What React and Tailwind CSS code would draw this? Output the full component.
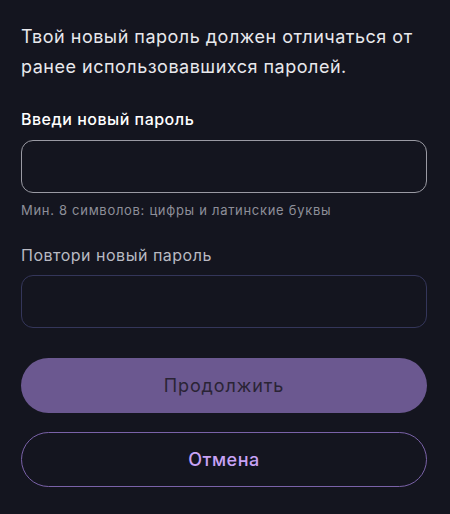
import React from "react";

const font = { fontFamily: "Inter, 'Noto Sans', sans-serif" };

export default function App() {
  return (
    <div className="min-h-[514px] w-[450px] bg-[#14151f] pl-[21px] pr-[23px] pt-[22px]" style={font}>
      <p className="text-[18px] leading-[30px] text-[#e8e8ec] tracking-[0.5px]">
        Твой новый пароль должен отличаться от ранее использовавшихся паролей.
      </p>

      <label className="mt-[26px] block text-[16px] font-medium leading-[22px] tracking-[0.5px] text-white">
        Введи новый пароль
      </label>
      <input
        type="password"
        className="mt-[10px] block h-[53px] w-full rounded-[12px] border border-[#9a9aa3] bg-transparent px-4 text-white outline-none"
      />
      <p className="mt-[8px] text-[13px] leading-[18px] tracking-[0.7px] text-[#8e8f99]">
        Мин. 8 символов: цифры и латинские буквы
      </p>

      <label className="mt-[25px] block text-[16px] leading-[22px] tracking-[0.5px] text-[#b9bac2]">
        Повтори новый пароль
      </label>
      <input
        type="password"
        className="mt-[9px] block h-[53px] w-full rounded-[12px] border border-[#34365a] bg-transparent px-4 text-white outline-none"
      />

      <button className="mt-[30px] flex h-[55px] w-full items-center justify-center rounded-full bg-[#6b5890] text-[18px] tracking-[0.9px] text-[#2a2435]">
        Продолжить
      </button>
      <button className="mt-[19px] flex h-[55px] w-full items-center justify-center rounded-full border border-[#7a62a8] text-[18px] font-medium tracking-[0.5px] text-[#c8a2f5]">
        Отмена
      </button>
    </div>
  );
}
